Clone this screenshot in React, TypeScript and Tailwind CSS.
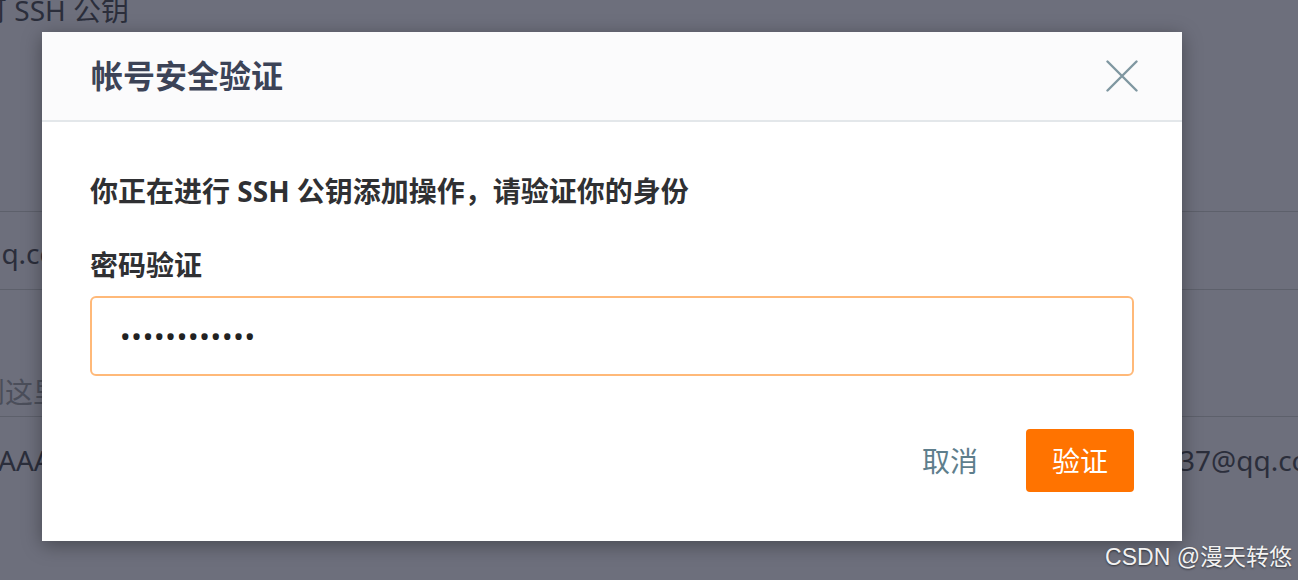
import React from "react";

const PageBehind = () => {
  return (
    <div className="flex flex-col text-[28px] leading-[40px] text-[#2b2e3b] whitespace-nowrap">
      <div className="h-[211px]">
        <div className="-mt-[10px] -ml-[21px]">可 SSH 公钥</div>
      </div>
      <div className="h-[78px] border-t border-[#5d606b] pt-[21px]">
        <div className="-ml-[41px]">@qq.com</div>
      </div>
      <div className="h-[127px] border-t border-[#5d606b] flex items-end pb-[4px]">
        <div className="-ml-[23px] text-[#4b4e5a]">到这里</div>
      </div>
      <div className="h-[164px] border-t border-[#5d606b] pt-[23px] flex">
        <div className="w-[1165px] shrink-0 overflow-hidden -ml-[2px]">AAAAB3NzaC1yc2EAAAADAQAB</div>
        <div className="shrink-0">837@qq.com</div>
      </div>
    </div>
  );
};

const CloseIcon = () => (
  <svg width="32" height="32" viewBox="0 0 32 32" fill="none">
    <path d="M1.5 1.5 L30.5 30.5 M30.5 1.5 L1.5 30.5" stroke="#7f97a1" strokeWidth="2.4" strokeLinecap="round" />
  </svg>
);

const VerifyDialog = () => {
  return (
    <div className="w-[1140px] h-[509px] bg-white shadow-[0_4px_18px_rgba(0,0,0,0.35)] flex flex-col">
      <div className="h-[90px] bg-[#fbfbfc] border-b-2 border-[#e3e7ea] flex items-center justify-between pl-[49px] pr-[44px]">
        <h2 className="text-[32px] leading-[44px] font-bold text-[#3c4357]">帐号安全验证</h2>
        <button className="flex items-center">
          <CloseIcon />
        </button>
      </div>

      <div className="flex flex-col px-[48px] pt-[49px]">
        <p className="text-[28px] leading-[40px] font-bold text-[#2f3033]">
          你正在进行 SSH 公钥添加操作，请验证你的身份
        </p>
        <label htmlFor="pwd" className="mt-[34px] text-[28px] leading-[40px] font-bold text-[#2f3033]">
          密码验证
        </label>
        <input
          id="pwd"
          type="password"
          readOnly
          value="abcdefghijkl"
          className="mt-[11px] h-[80px] w-full rounded-[6px] border-2 border-[#ffb979] px-[28px] text-[28px] text-[#222] outline-none tracking-[0.8px]"
        />
        <div className="mt-[53px] flex items-center justify-end gap-[48px]">
          <button className="text-[28px] leading-[40px] text-[#5e7e8c]">取消</button>
          <button className="h-[63px] w-[108px] rounded-[4px] bg-[#ff7300] text-[28px] text-white">验证</button>
        </div>
      </div>
    </div>
  );
};

export default function App() {
  return (
    <div className="relative h-[580px] w-full overflow-hidden bg-[#6d6f7c] font-['Noto_Sans','Noto_Sans_CJK_SC',sans-serif]">
      <PageBehind />
      <div className="absolute inset-0 pl-[42px] pt-[32px]">
        <VerifyDialog />
      </div>
      <div className="absolute right-[6px] bottom-[8px] text-[23px] leading-[30px] text-[#f2f2f2] font-['Liberation_Sans','Noto_Sans_CJK_SC',sans-serif] [text-shadow:0_1px_2px_rgba(0,0,0,0.55)]">
        CSDN @漫天转悠
      </div>
    </div>
  );
}
